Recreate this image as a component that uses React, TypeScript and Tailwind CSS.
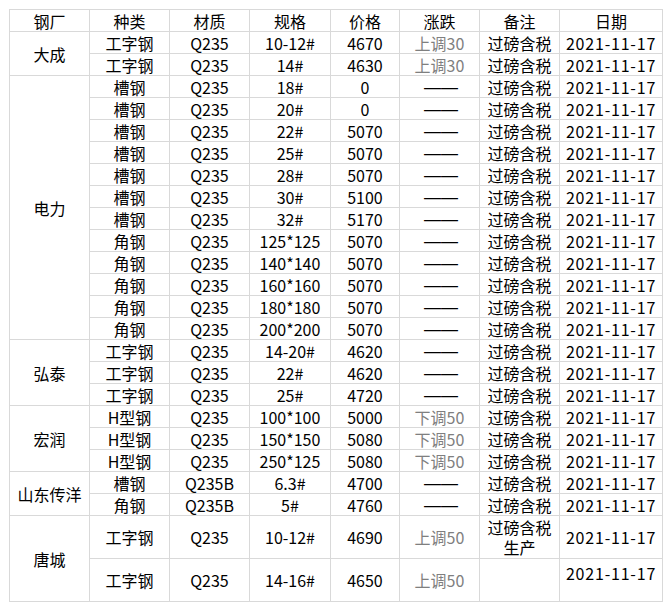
import React from 'react';

type Row = {
  kind: string;
  grade: string;
  spec: string;
  price: string;
  change: string;
  note: string;
  date: string;
  tall?: boolean;
  dateTop?: boolean;
};

type Group = { mill: string; rows: Row[] };

const D = '2021-11-17';
const N = '过磅含税';
const DASH = '——';

const r = (kind: string, grade: string, spec: string, price: string, change: string, note = N): Row => ({
  kind,
  grade,
  spec,
  price,
  change,
  note,
  date: D,
});

const groups: Group[] = [
  {
    mill: '大成',
    rows: [r('工字钢', 'Q235', '10-12#', '4670', '上调30'), r('工字钢', 'Q235', '14#', '4630', '上调30')],
  },
  {
    mill: '电力',
    rows: [
      r('槽钢', 'Q235', '18#', '0', DASH),
      r('槽钢', 'Q235', '20#', '0', DASH),
      r('槽钢', 'Q235', '22#', '5070', DASH),
      r('槽钢', 'Q235', '25#', '5070', DASH),
      r('槽钢', 'Q235', '28#', '5070', DASH),
      r('槽钢', 'Q235', '30#', '5100', DASH),
      r('槽钢', 'Q235', '32#', '5170', DASH),
      r('角钢', 'Q235', '125*125', '5070', DASH),
      r('角钢', 'Q235', '140*140', '5070', DASH),
      r('角钢', 'Q235', '160*160', '5070', DASH),
      r('角钢', 'Q235', '180*180', '5070', DASH),
      r('角钢', 'Q235', '200*200', '5070', DASH),
    ],
  },
  {
    mill: '弘泰',
    rows: [
      r('工字钢', 'Q235', '14-20#', '4620', DASH),
      r('工字钢', 'Q235', '22#', '4620', DASH),
      r('工字钢', 'Q235', '25#', '4720', DASH),
    ],
  },
  {
    mill: '宏润',
    rows: [
      r('H型钢', 'Q235', '100*100', '5000', '下调50'),
      r('H型钢', 'Q235', '150*150', '5080', '下调50'),
      r('H型钢', 'Q235', '250*125', '5080', '下调50'),
    ],
  },
  {
    mill: '山东传洋',
    rows: [r('槽钢', 'Q235B', '6.3#', '4700', DASH), r('角钢', 'Q235B', '5#', '4760', DASH)],
  },
  {
    mill: '唐城',
    rows: [
      { ...r('工字钢', 'Q235', '10-12#', '4690', '上调50', '过磅含税\n生产'), tall: true },
      { ...r('工字钢', 'Q235', '14-16#', '4650', '上调50', ''), tall: true, dateTop: true },
    ],
  },
];

const headers = ['钢厂', '种类', '材质', '规格', '价格', '涨跌', '备注', '日期'];
const widths = ['w-[80px]', 'w-[80px]', 'w-[80px]', 'w-[81px]', 'w-[69px]', 'w-[80px]', 'w-[80px]', 'w-[103px]'];

const cell = 'border border-[#d9d9d9] p-0 text-center align-middle';

export default function App() {
  return (
    <div className="min-h-[610px] w-[670px] bg-white pl-[9px] pt-[9px] text-[16px] leading-[20px] text-black [font-family:'Microsoft_YaHei','Noto_Sans_CJK_SC',sans-serif]">
      <table className="w-[653px] table-fixed border-collapse">
        <colgroup>
          {widths.map((w, i) => (
            <col key={i} className={w} />
          ))}
        </colgroup>
        <thead>
          <tr className="h-[22px]">
            {headers.map((h) => (
              <th key={h} className={`${cell} font-normal`}>
                {h}
              </th>
            ))}
          </tr>
        </thead>
        <tbody>
          {groups.map((g) =>
            g.rows.map((row, i) => {
              const dash = row.change === DASH;
              return (
                <tr key={g.mill + i} className={row.tall ? 'h-[43px]' : 'h-[22px]'}>
                  {i === 0 && (
                    <td rowSpan={g.rows.length} className={cell}>
                      {g.mill}
                    </td>
                  )}
                  <td className={cell}>{row.kind}</td>
                  <td className={cell}>{row.grade}</td>
                  <td className={cell}>{row.spec}</td>
                  <td className={cell}>{row.price}</td>
                  <td className={cell}>
                    {dash ? (
                      <span className="inline-block h-[20px] pl-[3px] align-top text-[17px] leading-[22px] [font-family:'Liberation_Sans',sans-serif]">
                        {row.change}
                      </span>
                    ) : (
                      <span className="text-[#7f7f7f]">{row.change}</span>
                    )}
                  </td>
                  <td className={`${cell} whitespace-pre-line`}>{row.note}</td>
                  <td className={`${cell} tracking-[0.8px] ${row.dateTop ? '!align-top pt-[4px]' : ''}`}>
                    {row.date}
                  </td>
                </tr>
              );
            })
          )}
        </tbody>
      </table>
    </div>
  );
}
